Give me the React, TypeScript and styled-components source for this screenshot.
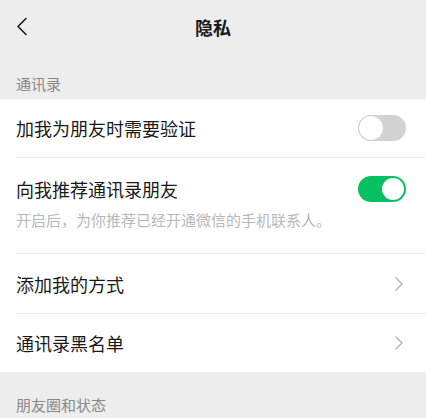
import React, { FunctionComponent, useState } from 'react';
import styled, { createGlobalStyle } from 'styled-components';

const GlobalStyle = createGlobalStyle`
  html, body {
    margin: 0;
    padding: 0;
    background: #ededed;
  }
  body {
    font-family: "Noto Sans CJK SC", "Noto Sans", sans-serif;
    color: #191919;
  }
`

const Page = styled.div`
  width: 426px;
  min-height: 418px;
  background: #ededed;
  overflow: hidden;
`

const NavBar = styled.div`
  height: 54px;
  display: flex;
  align-items: center;
  justify-content: center;
  position: relative;
`

const BackButton = styled.div`
  position: absolute;
  left: 16px;
  top: 17px;
  width: 12px;
  height: 19px;
  display: flex;
`

const Title = styled.div`
  font-size: 18px;
  font-weight: 700;
  line-height: 54px;
  color: #191919;
`

const SectionHeader = styled.div`
  padding: ${props => props.first ? "21px" : "24px"} 16px 7px;
  font-size: 15px;
  line-height: 17px;
  color: #888888;
`

const Panel = styled.div`
  background: #ffffff;
`

const Row = styled.div`
  display: flex;
  flex-direction: column;
  justify-content: ${props => props.stacked ? "flex-start" : "center"};
  margin-left: 16px;
  padding: ${props => props.stacked ? "18px 20px 0 0" : "0 20px 0 0"};
  min-height: ${props => props.height}px;
  border-top: ${props => props.divider ? "1px solid #ececec" : "none"};
  box-sizing: border-box;
`

const Line = styled.div`
  display: flex;
  align-items: center;
  min-height: 26px;
`

const RowTitle = styled.div`
  flex-grow: 1;
  font-size: 18px;
  line-height: 24px;
  color: #191919;
`

const RowDesc = styled.div`
  margin-top: 9px;
  font-size: 15px;
  line-height: 18px;
  color: #b8b8b8;
`

const Track = styled.div`
  position: relative;
  width: 48px;
  height: 26px;
  border-radius: 13px;
  flex-shrink: 0;
  box-sizing: border-box;
  background: ${props => props.on ? "#07c160" : "#d2d2d2"};
  cursor: pointer;
  transition: background 0.2s ease-in-out;
`

const Knob = styled.div`
  position: absolute;
  top: ${props => props.on ? "2px" : "0"};
  left: ${props => props.on ? "24px" : "0"};
  width: ${props => props.on ? "22px" : "26px"};
  height: ${props => props.on ? "22px" : "26px"};
  border-radius: 50%;
  background: #ffffff;
  box-sizing: border-box;
  border: ${props => props.on ? "none" : "1.5px solid #cfcfcf"};
  transition: left 0.2s ease-in-out;
`

const Arrow = styled.div`
  width: 8px;
  height: 14px;
  display: flex;
  flex-shrink: 0;
  margin-right: 3px;
`

const Switch: FunctionComponent<{ initial: boolean }> = ({ initial }) => {
    const [on, setOn] = useState(initial);
    return (
        <Track on={on} onClick={() => setOn(curr => !curr)}>
            <Knob on={on} />
        </Track>
    )
}

const Chevron = () => (
    <Arrow>
        <svg width="8" height="14" viewBox="0 0 8 14">
            <polyline points="1,1 7,7 1,13" fill="none" stroke="#b2b2b2" strokeWidth="1.4" strokeLinecap="round" strokeLinejoin="round" />
        </svg>
    </Arrow>
)

const App = () => {
    return (
        <Page>
            <GlobalStyle />
            <NavBar>
                <BackButton>
                    <svg width="12" height="19" viewBox="0 0 12 19">
                        <polyline points="10,1.5 2,9.5 10,17.5" fill="none" stroke="#191919" strokeWidth="1.6" strokeLinecap="round" strokeLinejoin="round" />
                    </svg>
                </BackButton>
                <Title>隐私</Title>
            </NavBar>
            <SectionHeader first>通讯录</SectionHeader>
            <Panel>
                <Row height={58}>
                    <Line>
                        <RowTitle>加我为朋友时需要验证</RowTitle>
                        <Switch initial={false} />
                    </Line>
                </Row>
                <Row height={96} divider stacked>
                    <Line>
                        <RowTitle>向我推荐通讯录朋友</RowTitle>
                        <Switch initial={true} />
                    </Line>
                    <RowDesc>开启后，为你推荐已经开通微信的手机联系人。</RowDesc>
                </Row>
                <Row height={60} divider>
                    <Line>
                        <RowTitle>添加我的方式</RowTitle>
                        <Chevron />
                    </Line>
                </Row>
                <Row height={59} divider>
                    <Line>
                        <RowTitle>通讯录黑名单</RowTitle>
                        <Chevron />
                    </Line>
                </Row>
            </Panel>
            <SectionHeader>朋友圈和状态</SectionHeader>
        </Page>
    )
}

export default App;
